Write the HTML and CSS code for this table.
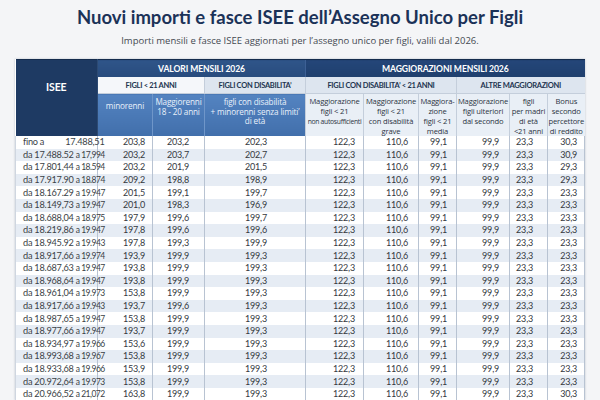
FILE: index.html
```html
<!DOCTYPE html>
<html lang="it">
<head>
<meta charset="utf-8">
<title>Assegno Unico ISEE 2026</title>
<link rel="stylesheet" href="styles.css">
</head>
<body>
<div class="page">
  <h1 class="title">Nuovi importi e fasce ISEE dell’Assegno Unico per Figli</h1>
  <p class="subtitle">Importi mensili e fasce ISEE aggiornati per l’assegno unico per figli, valili dal 2026.</p>
  <table class="grid">
    <colgroup>
      <col class="c-isee"><col class="c-min"><col class="c-mag"><col class="c-dis">
      <col class="c-m1"><col class="c-m2"><col class="c-m3"><col class="c-m4"><col class="c-m5"><col class="c-m6">
    </colgroup>
    <thead>
      <tr class="band">
        <th rowspan="3" class="isee-head">ISEE</th>
        <th colspan="3" class="band-valori">VALORI MENSILI 2026</th>
        <th colspan="6" class="band-magg">MAGGIORAZIONI MENSILI 2026</th>
      </tr>
      <tr class="sub">
        <th colspan="2" class="sub-light">FIGLI &lt; 21 ANNI</th>
        <th class="sub-blue">FIGLI CON DISABILITA’</th>
        <th colspan="3" class="sub-blue">FIGLI CON DISABILITA’ &lt; 21 ANNI</th>
        <th colspan="3" class="sub-blue">ALTRE MAGGIORAZIONI</th>
      </tr>
      <tr class="desc">
        <th class="d-blue d-min">minorenni</th>
        <th class="d-blue">Maggiorenni<br>18 - 20 anni</th>
        <th class="d-blue">figli con disabilità<br>+ minorenni senza limiti’<br>di età</th>
        <th class="d-light">Maggiorazione<br>figli &lt; 21<br><span class="tiny">non autosufficienti</span></th>
        <th class="d-light">Maggiorazione<br>figli &lt; 21<br>con disabilità<br>grave</th>
        <th class="d-light">Maggiora-<br>zione<br>figli &lt; 21<br>media</th>
        <th class="d-light">Maggiorazione<br>figli ulteriori<br>dal secondo</th>
        <th class="d-light">figli<br>per madri<br>di età<br>&lt;21 anni</th>
        <th class="d-light">Bonus<br>secondo<br>percettore<br>di reddito</th>
      </tr>
    </thead>
    <tbody>
      <tr><td class="isee">fino a<span class="gap"></span>17.488,51</td><td class="v-min">203,8</td><td class="v-mag">203,2</td><td class="v-dis">202,3</td><td class="v1">122,3</td><td class="v2">110,6</td><td class="v3">99,1</td><td class="v4">99,9</td><td class="v5">23,3</td><td class="v6">30,3</td></tr>
      <tr><td class="isee">da 17.488.52 <span class="to">a 17,994</span></td><td class="v-min">203,2</td><td class="v-mag">203,7</td><td class="v-dis">202,7</td><td class="v1">122,3</td><td class="v2">110,6</td><td class="v3">99,1</td><td class="v4">99,9</td><td class="v5">23,3</td><td class="v6">30,9</td></tr>
      <tr><td class="isee">da 17.801,44 <span class="to">a 18.594</span></td><td class="v-min">203,2</td><td class="v-mag">201,9</td><td class="v-dis">201,5</td><td class="v1">122,3</td><td class="v2">110,6</td><td class="v3">99,1</td><td class="v4">99,9</td><td class="v5">23,3</td><td class="v6">29,3</td></tr>
      <tr><td class="isee">da 17.917.90 <span class="to">a 18.874</span></td><td class="v-min">209,2</td><td class="v-mag">198,8</td><td class="v-dis">198,9</td><td class="v1">122,3</td><td class="v2">110,6</td><td class="v3">99,1</td><td class="v4">99,9</td><td class="v5">23,3</td><td class="v6">29,3</td></tr>
      <tr><td class="isee">da 18.167.29 <span class="to">a 19.947</span></td><td class="v-min">201,5</td><td class="v-mag">199,1</td><td class="v-dis">199,7</td><td class="v1">122,3</td><td class="v2">110,6</td><td class="v3">99,1</td><td class="v4">99,9</td><td class="v5">23,3</td><td class="v6">23,3</td></tr>
      <tr><td class="isee">da 18.149,73 <span class="to">a 19.947</span></td><td class="v-min">201,0</td><td class="v-mag">198,3</td><td class="v-dis">196,9</td><td class="v1">122,3</td><td class="v2">110,6</td><td class="v3">99,1</td><td class="v4">99,9</td><td class="v5">23,3</td><td class="v6">23,3</td></tr>
      <tr><td class="isee">da 18.688,04 <span class="to">a 18.975</span></td><td class="v-min">197,9</td><td class="v-mag">199,6</td><td class="v-dis">199,7</td><td class="v1">122,3</td><td class="v2">110,6</td><td class="v3">99,1</td><td class="v4">99,9</td><td class="v5">23,3</td><td class="v6">23,3</td></tr>
      <tr><td class="isee">da 18.219,86 <span class="to">a 19.947</span></td><td class="v-min">197,8</td><td class="v-mag">199,6</td><td class="v-dis">199,6</td><td class="v1">122,3</td><td class="v2">110,6</td><td class="v3">99,1</td><td class="v4">99,9</td><td class="v5">23,3</td><td class="v6">23,3</td></tr>
      <tr><td class="isee">da 18.945.92 <span class="to">a 19.943</span></td><td class="v-min">197,8</td><td class="v-mag">199,3</td><td class="v-dis">199,9</td><td class="v1">122,3</td><td class="v2">110,6</td><td class="v3">99,1</td><td class="v4">99,9</td><td class="v5">23,3</td><td class="v6">23,3</td></tr>
      <tr><td class="isee">da 18.917,66 <span class="to">a 19.974</span></td><td class="v-min">193,9</td><td class="v-mag">199,9</td><td class="v-dis">199,3</td><td class="v1">122,3</td><td class="v2">110,6</td><td class="v3">99,1</td><td class="v4">99,9</td><td class="v5">23,3</td><td class="v6">23,3</td></tr>
      <tr><td class="isee">da 18.687,63 <span class="to">a 19.947</span></td><td class="v-min">193,8</td><td class="v-mag">199,9</td><td class="v-dis">199,3</td><td class="v1">122,3</td><td class="v2">110,6</td><td class="v3">99,1</td><td class="v4">99,9</td><td class="v5">23,3</td><td class="v6">23,3</td></tr>
      <tr><td class="isee">da 18.968,64 <span class="to">a 19.947</span></td><td class="v-min">193,8</td><td class="v-mag">199,9</td><td class="v-dis">199,3</td><td class="v1">122,3</td><td class="v2">110,6</td><td class="v3">99,1</td><td class="v4">99,9</td><td class="v5">23,3</td><td class="v6">23,3</td></tr>
      <tr><td class="isee">da 18.961,04 <span class="to">a 19.973</span></td><td class="v-min">153,8</td><td class="v-mag">199,9</td><td class="v-dis">199,3</td><td class="v1">122,3</td><td class="v2">110,6</td><td class="v3">99,1</td><td class="v4">99,9</td><td class="v5">23,3</td><td class="v6">23,3</td></tr>
      <tr><td class="isee">da 18.917,66 <span class="to">a 19.943</span></td><td class="v-min">193,7</td><td class="v-mag">199,6</td><td class="v-dis">199,3</td><td class="v1">122,3</td><td class="v2">110,6</td><td class="v3">99,1</td><td class="v4">99,9</td><td class="v5">23,3</td><td class="v6">23,3</td></tr>
      <tr><td class="isee">da 18.987,65 <span class="to">a 19.947</span></td><td class="v-min">153,8</td><td class="v-mag">199,9</td><td class="v-dis">199,3</td><td class="v1">122,3</td><td class="v2">110,6</td><td class="v3">99,1</td><td class="v4">99,9</td><td class="v5">23,3</td><td class="v6">23,3</td></tr>
      <tr><td class="isee">da 18.977,66 <span class="to">a 19.947</span></td><td class="v-min">193,7</td><td class="v-mag">199,9</td><td class="v-dis">199,3</td><td class="v1">122,3</td><td class="v2">110,6</td><td class="v3">99,1</td><td class="v4">99,9</td><td class="v5">23,3</td><td class="v6">23,3</td></tr>
      <tr><td class="isee">da 18.934,97 <span class="to">a 19.966</span></td><td class="v-min">153,6</td><td class="v-mag">199,9</td><td class="v-dis">199,3</td><td class="v1">122,3</td><td class="v2">110,6</td><td class="v3">99,1</td><td class="v4">99,9</td><td class="v5">23,3</td><td class="v6">23,3</td></tr>
      <tr><td class="isee">da 18.993,68 <span class="to">a 19.967</span></td><td class="v-min">153,8</td><td class="v-mag">199,9</td><td class="v-dis">199,3</td><td class="v1">122,3</td><td class="v2">110,6</td><td class="v3">99,1</td><td class="v4">99,9</td><td class="v5">23,3</td><td class="v6">23,3</td></tr>
      <tr><td class="isee">da 18.933,68 <span class="to">a 19.966</span></td><td class="v-min">153,9</td><td class="v-mag">199,9</td><td class="v-dis">199,3</td><td class="v1">122,3</td><td class="v2">110,6</td><td class="v3">99,1</td><td class="v4">99,9</td><td class="v5">23,3</td><td class="v6">23,3</td></tr>
      <tr><td class="isee">da 20.972,64 <span class="to">a 19.973</span></td><td class="v-min">153,8</td><td class="v-mag">199,9</td><td class="v-dis">199,3</td><td class="v1">122,3</td><td class="v2">110,6</td><td class="v3">99,1</td><td class="v4">99,9</td><td class="v5">23,3</td><td class="v6">23,3</td></tr>
      <tr><td class="isee">da 20.966,52 <span class="to">a 21,072</span></td><td class="v-min">163,8</td><td class="v-mag">199,9</td><td class="v-dis">199,3</td><td class="v1">122,3</td><td class="v2">110,6</td><td class="v3">99,1</td><td class="v4">99,9</td><td class="v5">23,3</td><td class="v6">30,3</td></tr>
    </tbody>
  </table>
</div>
</body>
</html>
```

FILE: styles.css
```css
html, body {
  margin: 0;
  padding: 0;
  height: 400px;
  overflow: hidden;
  background: #f4f5f7;
}

.page {
  padding: 5px 15px 0 15px;
  font-family: "Open Sans", "Liberation Sans", sans-serif;
}

.title {
  margin: 0;
  text-align: center;
  font-family: Lato, "Open Sans", sans-serif;
  font-weight: 700;
  font-size: 18.5px;
  line-height: 24px;
  color: #1b3258;
}

.subtitle {
  margin: 5px 0 0 0;
  text-align: center;
  font-size: 9.5px;
  line-height: 13px;
  color: #444a52;
}

.grid {
  margin-top: 12px;
  width: 569px;
  table-layout: fixed;
  border-collapse: collapse;
  background: #ffffff;
  box-shadow: 0 0 2px rgba(30, 50, 80, 0.25);
}

.c-isee { width: 82px; }
.c-min { width: 55px; }
.c-mag { width: 52px; }
.c-dis { width: 101px; }
.c-m1 { width: 58px; }
.c-m2 { width: 55px; }
.c-m3 { width: 38px; }
.c-m4 { width: 53px; }
.c-m5 { width: 38px; }
.c-m6 { width: 37px; }

.grid th {
  padding: 0;
  font-weight: 700;
  text-align: center;
}

.band th {
  height: 17px;
  font-family: Lato, "Open Sans", sans-serif;
  font-size: 8.6px;
  line-height: 12px;
  color: #ffffff;
  letter-spacing: -0.1px;
  border-top: 1px solid #152c4d;
}

.isee-head {
  vertical-align: top;
  padding-top: 21px !important;
  background: #1e3a63;
  font-size: 10.5px !important;
  font-family: Lato, "Open Sans", sans-serif;
  color: #ffffff;
  font-weight: 700;
  border-right: 1px solid #2d4a73;
}

.band-valori {
  background: linear-gradient(#2f5589, #284b7d);
}

.band-magg {
  background: linear-gradient(#244679, #1f3f6d);
  border-left: 1px solid #3d6095;
}

.sub th {
  height: 16px;
  font-family: Lato, "Open Sans", sans-serif;
  font-size: 7.5px;
  line-height: 11px;
  letter-spacing: -0.3px;
  color: #22344f;
  border-left: 1px solid #c4cedb;
  border-bottom: 1px solid #c4cedb;
}

.sub-light {
  background: #f5f7fa;
}

.sub-blue {
  background: #dde5ef;
}

.desc th {
  height: 34px;
  vertical-align: top;
  padding-top: 2px;
  font-family: "Open Sans", "Liberation Sans", sans-serif;
  font-weight: 400;
  font-size: 7.6px;
  line-height: 10px;
  letter-spacing: -0.15px;
}

.d-blue {
  background: linear-gradient(#5484c1, #416fab);
  color: #e9f0fa;
  border-left: 1px solid #6f96c9;
  font-size: 8.2px !important;
  line-height: 9.5px !important;
  padding-top: 3px !important;
}

.d-min {
  padding-top: 7px !important;
  border-left: none !important;
}

.d-light {
  background: #e9eff6;
  color: #2b3443;
  border-left: 1px solid #c4cedb;
}

.tiny {
  font-size: 6.8px;
  letter-spacing: -0.3px;
}

.grid td {
  height: 12.6px;
  padding: 0;
  font-family: Lato, "Open Sans", sans-serif;
  font-size: 9px;
  line-height: 12px;
  letter-spacing: -0.2px;
  color: #35393f;
  text-align: right;
  white-space: nowrap;
  border-left: 1px solid #b8c3d2;
  border-right: 1px solid #b8c3d2;
}

.grid tbody tr:nth-child(even) td {
  background: #e6ecf4;
}

.grid td.isee {
  text-align: left;
  padding-left: 7px;
  font-size: 9.2px;
  letter-spacing: -0.25px;
  color: #3a3f46;
  border-left: 1px solid #cfd6e0;
}

.gap {
  display: inline-block;
  width: 21px;
}

.to {
  font-size: 8.5px;
  letter-spacing: -0.5px;
}

.grid td.v-min { padding-right: 7px; }
.grid td.v-mag { padding-right: 15px; }
.grid td.v-dis { text-align: center; padding-left: 2px; }
.grid td.v1 { padding-right: 8px; }
.grid td.v2 { padding-right: 10px; }
.grid td.v3 { padding-right: 9px; }
.grid td.v4 { padding-right: 10px; }
.grid td.v5 { padding-right: 14px; }
.grid td.v6 { padding-right: 7px; }
```
